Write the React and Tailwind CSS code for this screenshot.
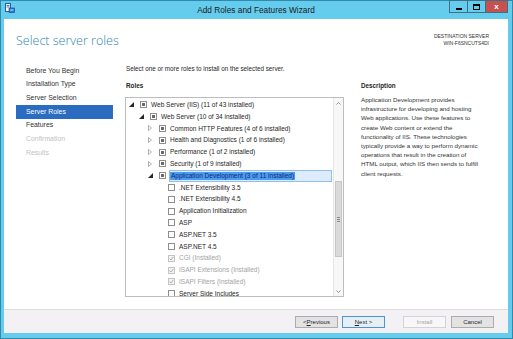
import React from 'react';

const NAV = [
  { label: 'Before You Begin' },
  { label: 'Installation Type' },
  { label: 'Server Selection' },
  { label: 'Server Roles', active: true },
  { label: 'Features' },
  { label: 'Confirmation', disabled: true },
  { label: 'Results', disabled: true }
];

// level, label, node: 'open' | 'closed' | null, check: 'mixed' | 'off' | 'on'
const ROLES = [
  { level: 0, label: 'Web Server (IIS) (11 of 43 installed)', node: 'open', check: 'mixed' },
  { level: 1, label: 'Web Server (10 of 34 installed)', node: 'open', check: 'mixed' },
  { level: 2, label: 'Common HTTP Features (4 of 6 installed)', node: 'closed', check: 'mixed' },
  { level: 2, label: 'Health and Diagnostics (1 of 6 installed)', node: 'closed', check: 'mixed' },
  { level: 2, label: 'Performance (1 of 2 installed)', node: 'closed', check: 'mixed' },
  { level: 2, label: 'Security (1 of 9 installed)', node: 'closed', check: 'mixed' },
  { level: 2, label: 'Application Development (3 of 11 installed)', node: 'open', check: 'mixed', selected: true },
  { level: 3, label: '.NET Extensibility 3.5', check: 'off' },
  { level: 3, label: '.NET Extensibility 4.5', check: 'off' },
  { level: 3, label: 'Application Initialization', check: 'off' },
  { level: 3, label: 'ASP', check: 'off' },
  { level: 3, label: 'ASP.NET 3.5', check: 'off' },
  { level: 3, label: 'ASP.NET 4.5', check: 'off' },
  { level: 3, label: 'CGI (Installed)', check: 'on' },
  { level: 3, label: 'ISAPI Extensions (Installed)', check: 'on' },
  { level: 3, label: 'ISAPI Filters (Installed)', check: 'on' },
  { level: 3, label: 'Server Side Includes', check: 'off' }
];

const INDENT = ['pl-0', 'pl-[10px]', 'pl-[19px]', 'pl-[28px]'];

const DESCRIPTION = [
  'Application Development provides',
  'infrastructure for developing and hosting',
  'Web applications. Use these features to',
  'create Web content or extend the',
  'functionality of IIS. These technologies',
  'typically provide a way to perform dynamic',
  'operations that result in the creation of',
  'HTML output, which IIS then sends to fulfill',
  'client requests.'
];

function Expander({ node }) {
  if (node === 'open') {
    return (
      <svg width="5" height="5" viewBox="0 0 5 5">
        <path d="M5 0 L5 5 L0 5 Z" fill="#262626" />
      </svg>
    );
  }
  if (node === 'closed') {
    return (
      <svg width="4" height="6" viewBox="0 0 4 6">
        <path d="M0.5 0.5 L3.5 3 L0.5 5.5 Z" fill="none" stroke="#9a9a9a" strokeWidth="0.8" />
      </svg>
    );
  }
  return null;
}

function CheckBox({ state }) {
  if (state === 'mixed') {
    return (
      <span className="flex h-[7px] w-[7px] items-center justify-center border border-[#8e8e8e] bg-white">
        <span className="block h-[3px] w-[3px] bg-[#6a6a6a]" />
      </span>
    );
  }
  if (state === 'on') {
    return (
      <span className="flex h-[7px] w-[7px] items-center justify-center border border-[#c4c4c4] bg-[#f4f4f4]">
        <svg width="5" height="5" viewBox="0 0 5 5">
          <path d="M0.6 2.6 L2 4 L4.4 0.8" fill="none" stroke="#9d9d9d" strokeWidth="0.8" />
        </svg>
      </span>
    );
  }
  return <span className="block h-[7px] w-[7px] border border-[#8e8e8e] bg-white" />;
}

function RoleRow({ role }) {
  const muted = role.check === 'on';
  return (
    <div className={`flex h-[11.8px] items-center ${INDENT[role.level]}`}>
      <span className="flex w-[10px] shrink-0 items-center justify-center">
        <Expander node={role.node} />
      </span>
      <span className="ml-[4px] shrink-0">
        <CheckBox state={role.check} />
      </span>
      {role.selected ? (
        <span className="ml-[3px] mr-[1px] flex h-full flex-1 items-center border border-[#8cbfee] bg-[#dcecfc]">
          <span className="bg-[#4c9bef] px-[1px] leading-[8px] text-[#0d2a78]">{role.label}</span>
        </span>
      ) : (
        <span className={`ml-[4px] whitespace-nowrap ${muted ? 'text-[#a3a3a3]' : 'text-[#262626]'}`}>
          {role.label}
        </span>
      )}
    </div>
  );
}

function WinButton({ children, className = '' }) {
  return (
    <div className={`flex h-[13px] items-center justify-center border border-[#3e6f82] ${className}`}>
      {children}
    </div>
  );
}

function FooterButton({ children, variant = 'default' }) {
  const styles = {
    default: 'border-[#acacac] bg-[#e3e3e3] text-[#1e1e1e]',
    primary: 'border-[#4b95d0] bg-[#e6eef6] text-[#1e1e1e]',
    disabled: 'border-[#d3d3d3] bg-[#f7f7f7] text-[#a6a6a6]'
  };
  return (
    <button
      type="button"
      className={`flex h-[12px] w-[43px] items-center justify-center border text-[6px] leading-none ${styles[variant]}`}
    >
      {children}
    </button>
  );
}

export default function App() {
  return (
    <div
      className="flex h-[339px] w-[513px] flex-col border border-[#2f8aab] bg-[#65ccee] pb-[5px] pl-[3px] pr-[4px]"
      style={{ fontFamily: '"Liberation Sans", Arial, sans-serif' }}
    >
      {/* Title bar */}
      <div className="grid h-[18px] shrink-0 grid-cols-[1fr_auto_1fr] items-start">
        <div className="pl-[1px] pt-[2px]">
          <svg width="10" height="10" viewBox="0 0 10 10">
            <rect x="0.5" y="0.5" width="5" height="8" fill="#ffffff" stroke="#1f5fa8" strokeWidth="1" />
            <path d="M1.5 2.5 H4.5 M1.5 4 H4.5" stroke="#1f5fa8" strokeWidth="0.8" />
            <rect x="4" y="5" width="5.5" height="4.5" fill="#2f7dd0" stroke="#123f7a" strokeWidth="0.6" />
            <path d="M5 7 H8.5" stroke="#ffffff" strokeWidth="0.7" />
          </svg>
        </div>
        <div className="pt-[4px] text-[8.3px] leading-[10px] text-[#1a1a1a]">Add Roles and Features Wizard</div>
        <div className="-mt-[1px] flex justify-end">
          <WinButton className="w-[18px] border-r-0">
            <span className="mt-[4px] block h-[2px] w-[6px] bg-black" />
          </WinButton>
          <WinButton className="w-[18px] border-r-0">
            <span className="block h-[6px] w-[7px] border border-t-2 border-black" />
          </WinButton>
          <WinButton className="w-[23px] bg-[#c75050]">
            <span className="text-[8px] font-bold leading-none text-white">x</span>
          </WinButton>
        </div>
      </div>

      {/* Client area */}
      <div className="flex flex-1 flex-col bg-white">
        <div className="flex h-[38px] shrink-0 justify-between">
          <div
            className="pl-[12px] pt-[14px] text-[12.5px] font-light leading-[16px] text-[#2f86b3]"
            style={{ fontFamily: '"Open Sans", "Liberation Sans", sans-serif' }}
          >
            Select server roles
          </div>
          <div className="pr-[19px] pt-[14px] text-right text-[5px] leading-[7px] text-[#333333]">
            <div>DESTINATION SERVER</div>
            <div>WIN-F6SNCUTS4DI</div>
          </div>
        </div>

        <div className="flex flex-1 pt-[7px]">
          {/* Steps */}
          <nav className="ml-[12px] w-[97px] shrink-0 text-[6.9px]">
            {NAV.map(item => (
              <div
                key={item.label}
                className={`flex h-[13.7px] items-center pl-[10px] ${
                  item.active
                    ? 'bg-[#2a6cc0] text-white'
                    : item.disabled
                      ? 'text-[#c2c2c2]'
                      : 'text-[#333333]'
                }`}
              >
                {item.label}
              </div>
            ))}
          </nav>

          {/* Main */}
          <div className="ml-[12px] flex flex-col">
            <div className="flex h-[10px] items-center pl-[1px] text-[6.3px] text-[#262626]">
              Select one or more roles to install on the selected server.
            </div>
            <div className="mt-[7px] flex">
              <div className="flex w-[219px] flex-col">
                <div className="flex h-[10px] items-center pl-[1px] text-[6.3px] font-bold text-[#262626]">
                  Roles
                </div>
                <div className="mt-[6px] flex h-[200px] overflow-hidden border border-[#bdbdbd] bg-white">
                  <div className="flex-1 overflow-hidden pt-[1px] text-[6.5px]">
                    {ROLES.map(role => (
                      <RoleRow key={role.label} role={role} />
                    ))}
                  </div>
                  <div className="flex w-[10px] shrink-0 flex-col border-l border-[#e6e6e6] bg-[#f7f7f7]">
                    <div className="flex h-[10px] items-center justify-center">
                      <svg width="5" height="3" viewBox="0 0 5 3">
                        <path d="M0.5 2.5 L2.5 0.5 L4.5 2.5" fill="none" stroke="#7a7a7a" strokeWidth="0.8" />
                      </svg>
                    </div>
                    <div className="mx-[1px] mt-[73px] flex h-[76px] flex-col items-center justify-center gap-[1px] border border-[#c6c6c6] bg-[#dadada]">
                      <span className="block h-px w-[3px] bg-[#8a8a8a]" />
                      <span className="block h-px w-[3px] bg-[#8a8a8a]" />
                      <span className="block h-px w-[3px] bg-[#8a8a8a]" />
                    </div>
                    <div className="flex-1" />
                    <div className="flex h-[10px] items-center justify-center">
                      <svg width="5" height="3" viewBox="0 0 5 3">
                        <path d="M0.5 0.5 L2.5 2.5 L4.5 0.5" fill="none" stroke="#7a7a7a" strokeWidth="0.8" />
                      </svg>
                    </div>
                  </div>
                </div>
              </div>

              <div className="ml-[17px] flex w-[135px] flex-col">
                <div className="flex h-[10px] items-center text-[6.3px] font-bold text-[#262626]">Description</div>
                <div className="mt-[4px] text-[6.2px] leading-[9.2px] text-[#333333]">
                  {DESCRIPTION.map(line => (
                    <div key={line} className="whitespace-nowrap">{line}</div>
                  ))}
                </div>
              </div>
            </div>
          </div>
        </div>

        {/* Footer */}
        <div className="flex h-[24px] shrink-0 items-center justify-end border-t border-[#dedede] bg-[#f4f1f4] pr-[14px]">
          <FooterButton>
            &lt; <span className="underline">P</span>revious
          </FooterButton>
          <span className="w-[4px]" />
          <FooterButton variant="primary">
            <span className="underline">N</span>ext &gt;
          </FooterButton>
          <span className="w-[18px]" />
          <FooterButton variant="disabled">Install</FooterButton>
          <span className="w-[5px]" />
          <FooterButton>Cancel</FooterButton>
        </div>
      </div>
    </div>
  );
}
